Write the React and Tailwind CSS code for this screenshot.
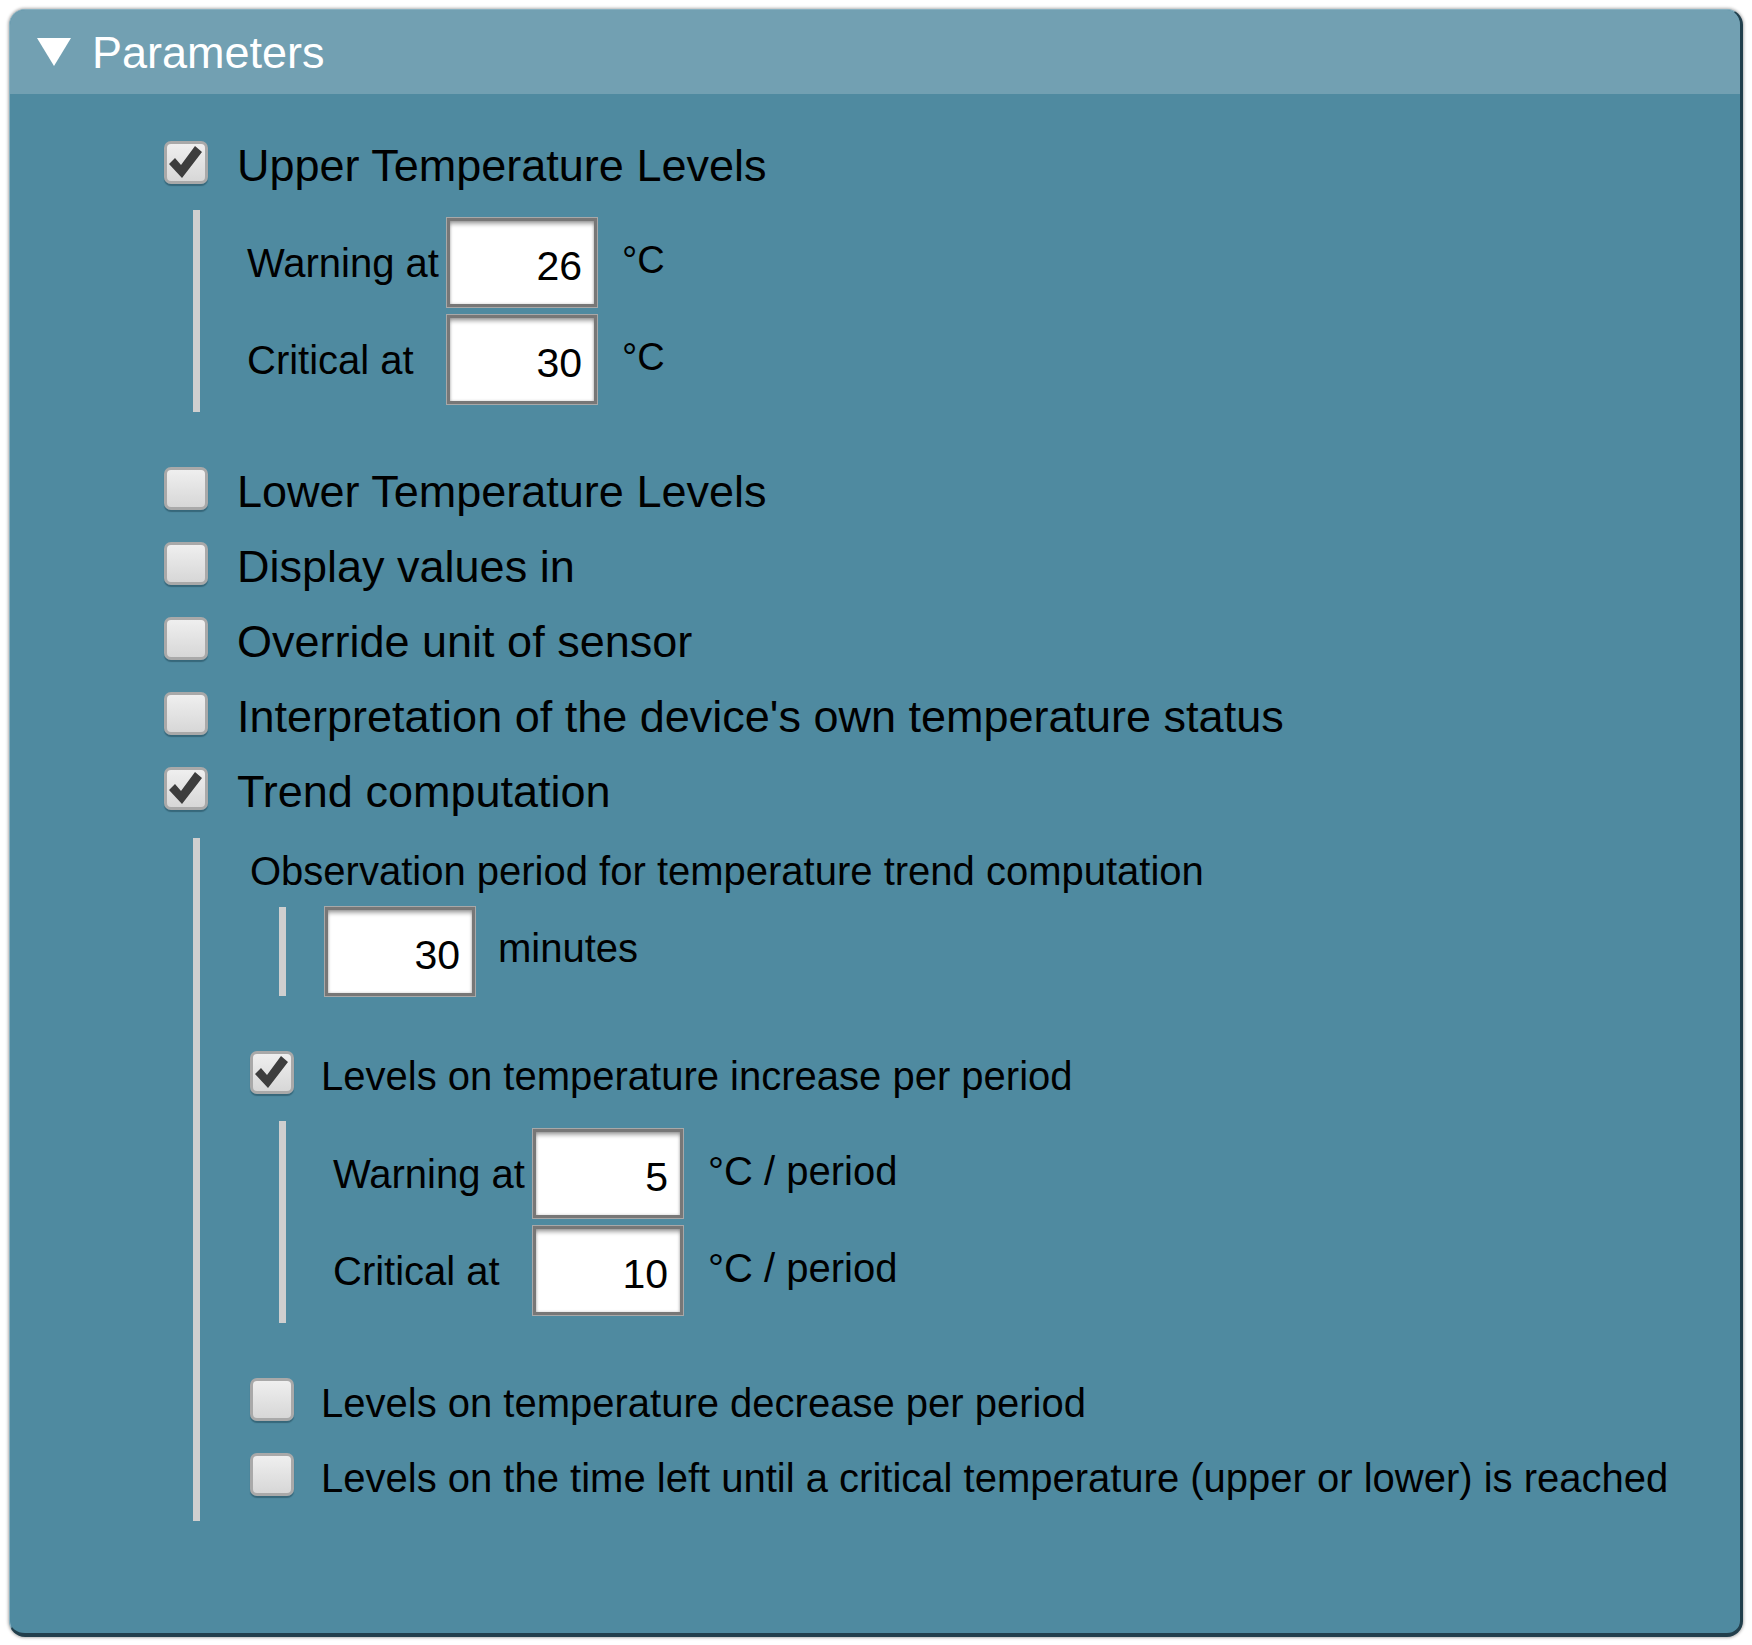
const font = "font-['Liberation_Sans',Arial,sans-serif]"

function Checkbox({ checked }) {
  return (
    <div className="w-[44px] h-[43px] mb-[6px] shrink-0 rounded-[7px] border-[3px] border-[#a9a9a9] bg-linear-to-b from-[#efefef] to-[#d7d7d7] shadow-[0_2px_1px_rgba(25,60,75,0.45)] flex items-center justify-center">
      {checked && (
        <svg width="34" height="33" viewBox="0 0 34 33">
          <polygon points="0,18 6,12 12,19 26,0 33,6 13,32" fill="#3d3d3d" />
        </svg>
      )}
    </div>
  )
}

function CheckRow({ checked, label, big }) {
  return (
    <div className="flex items-center h-[75px]">
      <Checkbox checked={checked} />
      <span className={`${big ? 'ml-[29px] text-[45px] leading-[45px]' : 'ml-[27px] text-[40px] leading-[40px]'} text-black whitespace-nowrap`}>
        {label}
      </span>
    </div>
  )
}

function NumberBox({ value }) {
  return (
    <input
      type="text"
      readOnly
      value={value}
      className={`${font} w-[150px] h-[89px] shrink-0 bg-white border-[3px] border-[#777777] pr-[12px] pt-[8px] text-right text-[41px] text-black outline-none shadow-[0_0_0_1px_#a8a8a8,inset_0_4px_4px_-1px_rgba(0,0,0,0.35),inset_0_0_3px_rgba(0,0,0,0.2)]`}
    />
  )
}

function LevelGroup({ warn, crit, unit, unitSize }) {
  const rows = [
    ['Warning at', warn],
    ['Critical at', crit],
  ]
  return (
    <div className="flex flex-col gap-[8px] py-[8px]">
      {rows.map(([label, v]) => (
        <div key={label} className="flex items-center h-[89px]">
          <span className="w-[200px] shrink-0 text-[40px] leading-[40px] text-black whitespace-nowrap">{label}</span>
          <NumberBox value={v} />
          <span className={`ml-[25px] ${unitSize} text-black whitespace-nowrap mb-[6px]`}>{unit}</span>
        </div>
      ))}
    </div>
  )
}

export default function App() {
  return (
    <div className={`${font} w-[1752px] h-[1645px] bg-white pt-[9px] pl-[9px]`}>
      <div className="w-[1734px] h-[1628px] rounded-[16px] overflow-hidden bg-[#4f8aa0] border-t border-l border-t-[#88b1c1] border-l-[#88b1c1] border-r-[3px] border-b-[4px] border-r-[#223f4c] border-b-[#223f4c] shadow-[0_0_3px_1px_rgba(0,0,0,0.3)]">
        {/* header */}
        <div className="h-[84px] bg-[#72a0b2] flex items-center pl-[27px]">
          <svg width="34" height="28" viewBox="0 0 34 28">
            <polygon points="0,0 34,0 17,28" fill="#ffffff" />
          </svg>
          <span className="ml-[21px] text-[45px] leading-[45px] text-white">Parameters</span>
        </div>

        {/* body */}
        <div className="pt-[34px] pl-[154px]">
          <CheckRow checked big label="Upper Temperature Levels" />
          <div className="mt-[7px] ml-[29px] border-l-[7px] border-[#cfcfcf] pl-[47px]">
            <LevelGroup warn="26" crit="30" unit="°C" unitSize="text-[38px] leading-[38px]" />
          </div>

          <div className="mt-[42px]">
            <CheckRow big label="Lower Temperature Levels" />
            <CheckRow big label="Display values in" />
            <CheckRow big label="Override unit of sensor" />
            <CheckRow big label="Interpretation of the device's own temperature status" />
            <CheckRow checked big label="Trend computation" />
          </div>

          <div className="mt-[9px] ml-[29px] border-l-[7px] border-[#cfcfcf] pl-[50px] pt-[13px] pb-[6px]">
            <div className="text-[40px] leading-[40px] text-black whitespace-nowrap">
              Observation period for temperature trend computation
            </div>
            <div className="mt-[16px] ml-[29px] border-l-[7px] border-[#cfcfcf] pl-[39px] flex items-center">
              <NumberBox value="30" />
              <span className="ml-[23px] mb-[8px] text-[40px] leading-[40px] text-black">minutes</span>
            </div>

            <div className="mt-[42px]">
              <CheckRow checked label="Levels on temperature increase per period" />
            </div>
            <div className="mt-[8px] ml-[29px] border-l-[7px] border-[#cfcfcf] pl-[47px]">
              <LevelGroup warn="5" crit="10" unit="°C / period" unitSize="text-[40px] leading-[40px]" />
            </div>

            <div className="mt-[42px]">
              <CheckRow label="Levels on temperature decrease per period" />
              <CheckRow label="Levels on the time left until a critical temperature (upper or lower) is reached" />
            </div>
          </div>
        </div>
      </div>
    </div>
  )
}
